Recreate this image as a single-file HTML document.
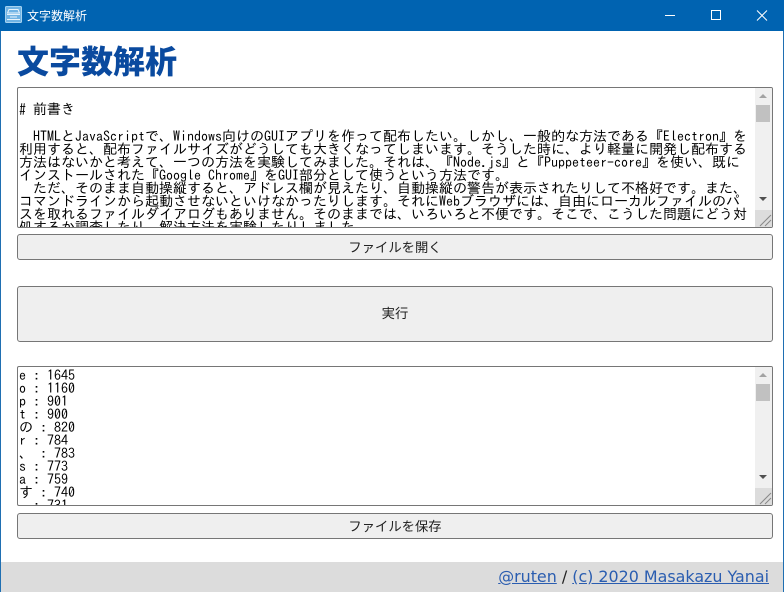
<!DOCTYPE html>
<html lang="ja"><head><meta charset="utf-8"><title>文字数解析</title>
<style>
*{box-sizing:border-box}
html,body{margin:0;padding:0;width:784px;height:592px;overflow:hidden;background:#fff}
body{position:relative;font-family:"Liberation Sans","Noto Sans CJK JP",sans-serif}
.abs{position:absolute}
#bar{left:0;top:0;width:784px;height:31px;background:#0063b1}
#title{left:27px;top:8px;font-size:12px;line-height:16px;color:#fff;font-family:"Noto Sans CJK JP",sans-serif;white-space:nowrap}
#lb{left:0;top:31px;width:1px;height:561px;background:#1f6fb2}
#rb{left:783px;top:31px;width:1px;height:561px;background:#1f6fb2}
h1{position:absolute;left:17px;top:40px;margin:0;font-size:32px;line-height:40px;font-weight:900;color:#0a4a9f;font-family:"Noto Sans CJK JP",sans-serif;white-space:nowrap}
.ta{position:absolute;left:17px;width:756px;background:#fff;border:1px solid #767676;border-radius:2px;overflow:hidden;font-family:IPAGothic,"Liberation Mono",monospace;font-size:14px;color:#000}
.ta div.l{position:absolute;left:1px;white-space:pre;line-height:13px}
.sb{position:absolute;right:0;top:0;bottom:0;width:17px;background:#f0f0f0}
.th{position:absolute;left:1px;top:17px;width:14px;height:17px;background:#c1c1c1}
.up{position:absolute;left:4px;top:6px;width:0;height:0;border-left:4px solid transparent;border-right:4px solid transparent;border-bottom:4px solid #a3a3a3}
.dn{position:absolute;left:4px;width:0;height:0;border-left:4px solid transparent;border-right:4px solid transparent;border-top:4px solid #505050}
.grip{position:absolute;right:0;bottom:0;width:17px;height:17px;background:#dcdcdc}
.btn{position:absolute;left:17px;width:756px;background:#efefef;border:1px solid #767676;border-radius:3px;text-align:center;font-size:13.33px;color:#222;font-family:"Noto Sans CJK JP",sans-serif}
#foot{left:1px;top:562px;width:782px;height:30px;background:#dcdcdc}
#ft{right:15px;top:565px;font-size:15.9px;line-height:24px;color:#222;font-family:"DejaVu Sans",sans-serif;white-space:nowrap}
#ft a{color:#2a5db0;text-decoration:underline}
</style></head>
<body>
<div class="abs" id="bar"></div>
<svg class="abs" style="left:5px;top:6px" width="17" height="17" viewBox="0 0 17 17"><rect x=".5" y=".5" width="16" height="16" rx="1" fill="#6fb3e4" stroke="#a5d2f0"/><path d="M4 3.500h9l1.500 3.500h-12z" fill="#6fb3e4" stroke="#e6f3fb"/><path d="M2 8.500h13M2 13.500h13M5 11h7" stroke="#e6f3fb" fill="none"/></svg>
<div class="abs" id="title">文字数解析</div>
<svg class="abs" style="left:660px;top:8px" width="110" height="16" viewBox="0 0 110 16" fill="none" stroke="#fff" stroke-width="1"><path d="M5 7.500h10"/><rect x="51.500" y="2.500" width="9" height="9"/><path d="M97 2.500l10 10M107 2.500l-10 10"/></svg>
<div class="abs" id="lb"></div><div class="abs" id="rb"></div>
<h1>文字数解析</h1>

<div class="ta" style="top:87px;height:141px">
<div class="l" style="top:15px"># 前書き</div>
<div class="l" style="top:42px">  HTMLとJavaScriptで、Windows向けのGUIアプリを作って配布したい。しかし、一般的な方法である『Electron』を</div>
<div class="l" style="top:55px">利用すると、配布ファイルサイズがどうしても大きくなってしまいます。そうした時に、より軽量に開発し配布する</div>
<div class="l" style="top:68px">方法はないかと考えて、一つの方法を実験してみました。それは、『Node.js』と『Puppeteer-core』を使い、既に</div>
<div class="l" style="top:81px">インストールされた『Google Chrome』をGUI部分として使うという方法です。</div>
<div class="l" style="top:94px">  ただ、そのまま自動操縦すると、アドレス欄が見えたり、自動操縦の警告が表示されたりして不格好です。また、</div>
<div class="l" style="top:107px">コマンドラインから起動させないといけなかったりします。それにWebブラウザには、自由にローカルファイルのパ</div>
<div class="l" style="top:120px">スを取れるファイルダイアログもありません。そのままでは、いろいろと不便です。そこで、こうした問題にどう対</div>
<div class="l" style="top:133px">処するか調査したり、解決方法を実験したりしました。</div>
<div class="sb"><div class="up"></div><div class="th"></div><div class="dn" style="top:109px"></div></div>
<svg class="grip" viewBox="0 0 17 17" fill="none" stroke="#888"><path d="M5 16L16 5M10 16L16 10"/></svg>
</div>
<div class="btn" style="top:234px;height:26px;line-height:24px">ファイルを開く</div>
<div class="btn" style="top:286px;height:56px;line-height:52px">実行</div>

<div class="ta" style="top:366px;height:140px">
<div class="l" style="top:2px">e : 1645</div>
<div class="l" style="top:15px">o : 1160</div>
<div class="l" style="top:28px">p : 901</div>
<div class="l" style="top:41px">t : 900</div>
<div class="l" style="top:54px">の : 820</div>
<div class="l" style="top:67px">r : 784</div>
<div class="l" style="top:80px">、 : 783</div>
<div class="l" style="top:93px">s : 773</div>
<div class="l" style="top:106px">a : 759</div>
<div class="l" style="top:119px">す : 740</div>
<div class="l" style="top:132px">  : 731</div>
<div class="sb"><div class="up"></div><div class="th"></div><div class="dn" style="top:108px"></div></div>
<svg class="grip" viewBox="0 0 17 17" fill="none" stroke="#888"><path d="M5 16L16 5M10 16L16 10"/></svg>
</div>
<div class="btn" style="top:513px;height:26px;line-height:24px">ファイルを保存</div>

<div class="abs" id="foot"></div>
<div class="abs" id="ft"><a href="#">@ruten</a> / <a href="#">(c) 2020 Masakazu Yanai</a></div>
</body></html>
